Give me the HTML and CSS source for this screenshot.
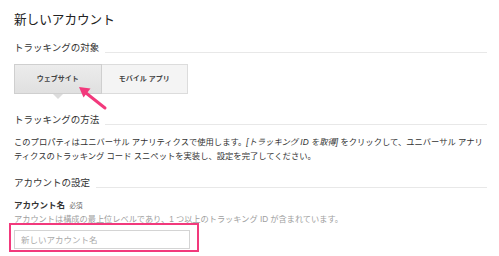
FILE: index.html
```
<!DOCTYPE html>
<html lang="ja">
<head>
  <meta charset="UTF-8" />
  <title>新しいアカウント</title>
  <link rel="stylesheet" href="styles.css">
</head>
<body>

<div class="page">
  <h1 class="title">新しいアカウント</h1>

  <div class="section-head">トラッキングの対象</div>
  <div class="tabs">
    <div class="tab active">ウェブサイト</div>
    <div class="tab">モバイル アプリ</div>
  </div>

  <div class="section-head method">トラッキングの方法</div>
  <p class="desc">このプロパティはユニバーサル アナリティクスで使用します。<em>[トラッキング ID を取得]</em> をクリックして、ユニバーサル アナリティクスのトラッキング コード スニペットを実装し、設定を完了してください。</p>

  <div class="section-head account">アカウントの設定</div>
  <div class="field-label">アカウント名 <span class="req">必須</span></div>
  <div class="hint">アカウントは構成の最上位レベルであり、1 つ以上のトラッキング ID が含まれています。</div>
  <div class="highlight">
    <input type="text" class="name-input" placeholder="新しいアカウント名">
  </div>

  <!-- annotation arrow pointing at the selected tab -->
  <svg class="callout" width="499" height="256" viewBox="0 0 499 256">
    <line x1="105" y1="108" x2="86" y2="93" stroke="#f2397c" stroke-width="3" stroke-linecap="round" />
    <polygon points="79,87 90.5,88.5 83.5,97.5" fill="#f2397c" />
  </svg>
</div>

</body>
</html>
```

FILE: styles.css
```
body {
  margin: 0;
  padding: 0;
  background-color: #fff;
  font-family: "Liberation Sans", "Noto Sans CJK JP", sans-serif;
  color: #333;
}
.page {
  position: relative;
  width: 473px;
  height: 256px;
  padding: 10px 12px 0 14px;
  box-sizing: content-box;
  overflow: hidden;
}
.title {
  margin: 0 0 10px;
  font-size: 12.6px;
  font-weight: normal;
  line-height: 20px;
  color: #222;
}
.section-head {
  display: flex;
  align-items: flex-end;
  height: 16px;
  font-size: 9.5px;
  line-height: 16px;
  color: #333;
}
.section-head::after {
  content: "";
  flex: 1;
  height: 1px;
  margin: 0 0 3px 6px;
  background-color: #e8e8e8;
}
.tabs {
  display: flex;
  width: 174px;
  margin-top: 8px;
}
.tab {
  position: relative;
  flex: 1;
  height: 28px;
  line-height: 28px;
  text-align: center;
  font-size: 7px;
  font-weight: bold;
  color: #444;
  background-color: #f4f4f4;
  border: 1px solid #dcdcdc;
}
.tab + .tab {
  border-left: 0;
}
.tab.active {
  background: linear-gradient(#ececec, #e0e0e0);
  border-color: #cfcfcf;
}
.tab.active::after {
  content: "";
  position: absolute;
  left: 50%;
  bottom: -6px;
  margin-left: -5px;
  border-left: 5px solid transparent;
  border-right: 5px solid transparent;
  border-top: 5px solid #dcdcdc;
}
.section-head.method {
  margin-top: 18px;
}
.desc {
  margin: 7px 0 0;
  font-size: 8.3px;
  line-height: 14px;
  color: #333;
}
.desc em {
  font-style: italic;
}
.section-head.account {
  margin-top: 12px;
}
.field-label {
  margin-top: 7px;
  font-size: 8.5px;
  font-weight: bold;
  line-height: 14px;
  color: #333;
}
.req {
  font-size: 6.5px;
  font-weight: normal;
  color: #666;
  margin-left: 2px;
}
.hint {
  margin-top: 2px;
  font-size: 8.2px;
  line-height: 10px;
  color: #a0a0a0;
}
.highlight {
  width: 180px;
  margin: -2px 0 0 -5px;
  padding: 5px 3px 1px;
  border: 2px solid #f2397c;
}
.name-input {
  display: block;
  width: 176px;
  height: 19px;
  box-sizing: border-box;
  margin: 0;
  padding: 0 6px;
  border: 1px solid #d4d4d4;
  font-family: "Liberation Sans", "Noto Sans CJK JP", sans-serif;
  font-size: 8.5px;
  color: #333;
}
.name-input::placeholder {
  color: #aaa;
}
.callout {
  position: absolute;
  left: 0;
  top: 0;
  pointer-events: none;
}
```
